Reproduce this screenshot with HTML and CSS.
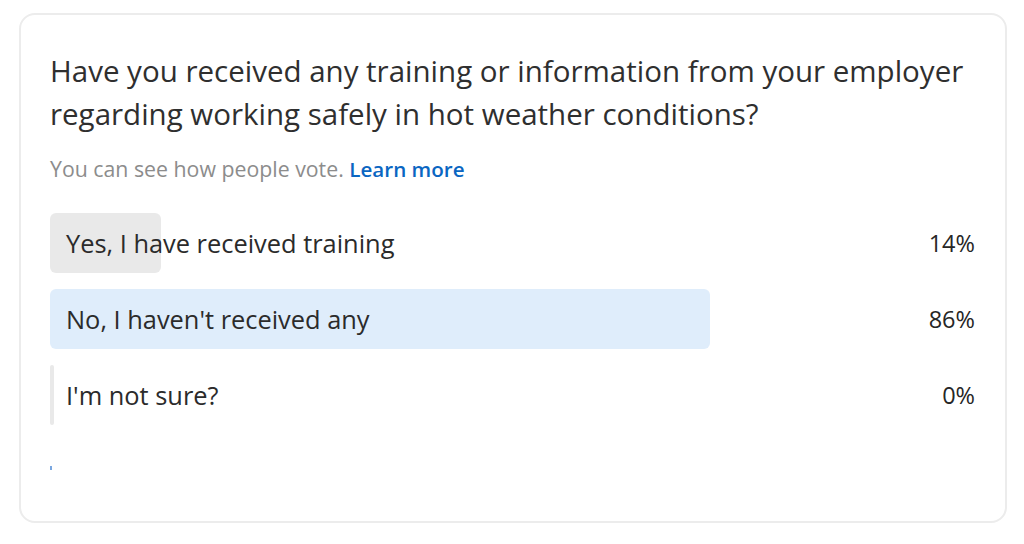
FILE: index.html
```html
<!DOCTYPE html>
<html lang="en">
<head>
<meta charset="utf-8">
<title>Poll</title>
<link rel="stylesheet" href="styles.css">
</head>
<body>
<div class="card">
  <h1 class="question">Have you received any training or information from your employer<br>regarding working safely in hot weather conditions?</h1>
  <p class="note">You can see how people vote. <a class="learn" href="#">Learn more</a></p>
  <ul class="options">
    <li class="option">
      <span class="bar bar-gray" style="width:111px"></span>
      <span class="label">Yes, I have received training</span>
      <span class="pct">14%</span>
    </li>
    <li class="option">
      <span class="bar bar-blue" style="width:660px"></span>
      <span class="label">No, I haven't received any</span>
      <span class="pct">86%</span>
    </li>
    <li class="option">
      <span class="bar bar-gray" style="width:4px"></span>
      <span class="label">I'm not sure?</span>
      <span class="pct">0%</span>
    </li>
  </ul>
  <div class="tick"></div>
</div>
</body>
</html>
```

FILE: styles.css
```css
html, body {
  margin: 0;
  padding: 0;
  background: #ffffff;
}
body {
  font-family: "Open Sans", "Noto Sans", sans-serif;
  color: #2b2b2b;
}
.card {
  box-sizing: border-box;
  width: 988px;
  height: 510px;
  margin: 13px 0 0 19px;
  border: 2px solid #ececec;
  border-radius: 16px;
  padding: 34px 30px 0 29px;
}
.question {
  margin: 0;
  font-size: 29.5px;
  font-weight: 400;
  line-height: 43px;
  color: #2f2f2f;
  white-space: nowrap;
}
.note {
  margin: 21px 0 0 0;
  font-size: 21.3px;
  line-height: 26px;
  color: #8c8c8c;
}
.learn {
  color: #0a66c2;
  font-weight: 600;
  font-size: 20.6px;
  text-decoration: none;
}
.options {
  list-style: none;
  margin: 31px 0 0 0;
  padding: 0;
  display: flex;
  flex-direction: column;
  gap: 16px;
}
.option {
  position: relative;
  height: 60px;
  display: flex;
  align-items: center;
  justify-content: space-between;
  font-size: 25.4px;
  color: #2b2b2b;
}
.bar {
  position: absolute;
  left: 0;
  top: 0;
  bottom: 0;
  border-radius: 6px;
}
.bar-gray {
  background: #e9e9e9;
}
.bar-blue {
  background: #dfedfb;
}
.label {
  position: relative;
  padding-left: 16px;
}
.pct {
  position: relative;
  font-size: 23.5px;
  font-weight: 500;
  color: #262626;
}
.tick {
  width: 2px;
  height: 4px;
  margin-top: 41px;
  background: #7aa7e0;
}
```
